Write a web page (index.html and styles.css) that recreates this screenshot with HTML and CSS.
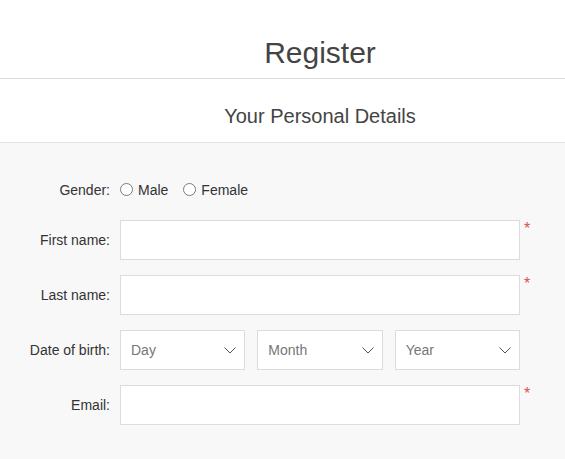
FILE: index.html
```html
<!DOCTYPE html>
<html lang="en">
<head>
<meta charset="utf-8">
<title>Register</title>
<link rel="stylesheet" href="styles.css">
</head>
<body>
<div class="page">
  <header class="page-header">
    <h1 class="title">Register</h1>
  </header>
  <div class="section-header">
    <h2 class="subtitle">Your Personal Details</h2>
  </div>
  <form class="form">
    <div class="row row-gender">
      <span class="label">Gender:</span>
      <div class="radios">
        <label class="radio"><input type="radio" name="gender" class="radio-input"><span class="radio-dot"></span>Male</label>
        <label class="radio"><input type="radio" name="gender" class="radio-input"><span class="radio-dot"></span>Female</label>
      </div>
    </div>
    <div class="row">
      <label class="label" for="fn">First name:</label>
      <input class="field" id="fn" type="text">
      <span class="req">*</span>
    </div>
    <div class="row">
      <label class="label" for="ln">Last name:</label>
      <input class="field" id="ln" type="text">
      <span class="req">*</span>
    </div>
    <div class="row">
      <span class="label">Date of birth:</span>
      <div class="dob">
        <div class="select-wrap">
          <select class="select"><option>Day</option></select>
          <svg class="chev" width="12" height="7" viewBox="0 0 12 7"><path d="M0.5 0.5 L6 6 L11.5 0.5" fill="none" stroke="#555" stroke-width="1"/></svg>
        </div>
        <div class="select-wrap">
          <select class="select"><option>Month</option></select>
          <svg class="chev" width="12" height="7" viewBox="0 0 12 7"><path d="M0.5 0.5 L6 6 L11.5 0.5" fill="none" stroke="#555" stroke-width="1"/></svg>
        </div>
        <div class="select-wrap">
          <select class="select"><option>Year</option></select>
          <svg class="chev" width="12" height="7" viewBox="0 0 12 7"><path d="M0.5 0.5 L6 6 L11.5 0.5" fill="none" stroke="#555" stroke-width="1"/></svg>
        </div>
      </div>
    </div>
    <div class="row">
      <label class="label" for="em">Email:</label>
      <input class="field" id="em" type="email">
      <span class="req">*</span>
    </div>
  </form>
</div>
</body>
</html>
```
FILE: styles.css
```css
html, body {
  margin: 0;
  padding: 0;
  background: #f8f8f8;
}
body {
  font-family: "Liberation Sans", Arial, sans-serif;
  color: #333;
}
.page {
  width: 100%;
}
.page-header {
  background: #fff;
  padding: 36px 0 8px;
  border-bottom: 1px solid #dddddd;
}
.title,
.subtitle {
  box-sizing: border-box;
  padding-left: 75px;
  margin: 0;
  font-weight: normal;
  color: #444;
  text-align: center;
}
.title {
  font-size: 30px;
  line-height: 34px;
}
.section-header {
  background: #fff;
  padding: 25px 0 14px;
  border-bottom: 1px solid #e2e2e2;
}
.subtitle {
  font-size: 20px;
  line-height: 24px;
}
.form {
  padding-top: 31px;
  display: flex;
  flex-direction: column;
  gap: 15px;
}
.row {
  display: flex;
  align-items: center;
  height: 40px;
}
.row-gender {
  height: 31px;
}
.label {
  width: 110px;
  margin-right: 10px;
  text-align: right;
  font-size: 14px;
  line-height: 16px;
  color: #333;
}
.radios {
  display: flex;
  align-items: center;
}
.radio {
  display: flex;
  align-items: center;
  font-size: 14px;
  line-height: 16px;
  color: #333;
  margin-right: 15px;
}
.radio-input {
  display: none;
}
.radio-dot {
  width: 11px;
  height: 11px;
  border: 1px solid #7a7a7a;
  border-radius: 50%;
  background: #fff;
  margin-right: 5px;
}
.field {
  box-sizing: border-box;
  width: 400px;
  height: 40px;
  margin: 0;
  border: 1px solid #dcdcdc;
  background: #fff;
  font: 14px "Liberation Sans", Arial, sans-serif;
  padding: 0 10px;
  outline: none;
}
.req {
  align-self: flex-start;
  margin-left: 4px;
  margin-top: 1px;
  color: #d9534f;
  font-size: 16px;
  line-height: 16px;
}
.dob {
  display: flex;
  gap: 12px;
  width: 400px;
}
.select-wrap {
  position: relative;
  flex: 1;
}
.select {
  box-sizing: border-box;
  width: 100%;
  height: 40px;
  margin: 0;
  appearance: none;
  -webkit-appearance: none;
  border: 1px solid #dcdcdc;
  border-radius: 0;
  background: #fff;
  font: 14px "Liberation Sans", Arial, sans-serif;
  color: #777;
  padding: 0 10px;
  outline: none;
}
.chev {
  position: absolute;
  right: 9px;
  top: 17px;
  pointer-events: none;
}
```
